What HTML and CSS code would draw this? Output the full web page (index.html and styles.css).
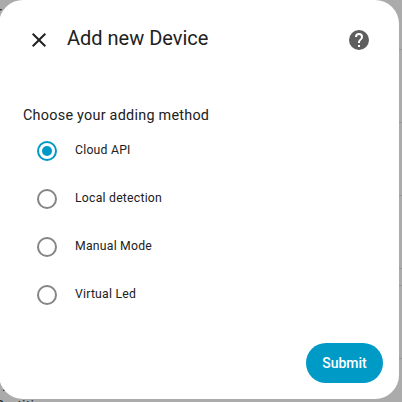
FILE: index.html
```html
<!DOCTYPE html>
<html lang="en">
<head>
<meta charset="utf-8">
<title>Add new Device</title>
<link rel="stylesheet" href="styles.css">
</head>
<body>
<div class="backdrop">
  <i class="rule r1"></i><i class="rule r2"></i><i class="rule r3"></i><i class="rule r4"></i><i class="rule r5"></i><i class="rule r6"></i>
  <span class="behind b1">r</span>
  <span class="behind b2">.</span>
  <span class="behind b3">Partiti</span>
</div>
<main class="dialog">
  <header class="head">
    <svg class="icon close" viewBox="0 0 24 24"><path d="M19 6.41L17.59 5 12 10.59 6.41 5 5 6.41 10.59 12 5 17.59 6.41 19 12 13.41 17.59 19 19 17.59 13.41 12z"/></svg>
    <h1 class="title">Add new Device</h1>
    <svg class="icon help" viewBox="0 0 24 24"><path d="M15.07 11.25l-.9.92C13.45 12.89 13 13.5 13 15h-2v-.5c0-1.11.45-2.11 1.17-2.83l1.24-1.26c.37-.36.59-.86.59-1.41a2 2 0 0 0-4 0H8a4 4 0 0 1 8 0c0 .88-.36 1.67-.93 2.25M13 19h-2v-2h2M12 2a10 10 0 1 0 0 20 10 10 0 0 0 0-20z"/></svg>
  </header>
  <section class="content">
    <p class="label">Choose your adding method</p>
    <div class="option"><span class="radio checked"></span><span class="name">Cloud API</span></div>
    <div class="option"><span class="radio"></span><span class="name">Local detection</span></div>
    <div class="option"><span class="radio"></span><span class="name">Manual Mode</span></div>
    <div class="option"><span class="radio"></span><span class="name">Virtual Led</span></div>
  </section>
  <footer class="foot"><button class="submit">Submit</button></footer>
</main>
</body>
</html>
```
FILE: styles.css
```css
* { box-sizing: border-box; }
body {
  margin: 0;
  height: 402px;
  overflow: hidden;
  background: #ababab;
  font-family: Roboto, sans-serif;
  color: #212121;
}
.backdrop { position: absolute; inset: 0; overflow: hidden; }
.rule { position: absolute; right: 0; width: 3px; height: 1px; background: #979797; }
.r1 { top: 49px; }
.r2 { top: 122px; }
.r3 { top: 195px; }
.r4 { top: 268px; }
.r5 { top: 285px; }
.r6 { top: 358px; }
.behind { position: absolute; font-size: 14px; line-height: 16px; letter-spacing: 0.25px; }
.b1 { left: -3px; top: 4px; }
.b2 { left: 2px; top: 378px; }
.b3 { left: -5px; top: 398px; }
.dialog {
  position: relative;
  display: flex;
  flex-direction: column;
  width: 400px;
  height: 399px;
  margin-left: -1px;
  padding: 16px;
  border-radius: 24px;
  background: #fff;
}
.head { display: flex; align-items: center; height: 48px; padding: 0 12px; }
.icon { width: 24px; height: 24px; flex: none; }
.close { fill: #212121; }
.help { fill: #5e5e5e; }
.title {
  flex: 1;
  margin: -4px 0 0 16px;
  font-size: 20px;
  line-height: 28px;
  font-weight: 400;
}
.content { padding: 41px 8px 0; }
.label { margin: 0 0 13px; font-size: 14.4px; line-height: 21px; letter-spacing: 0.25px; }
.option { display: flex; align-items: center; height: 48px; padding-left: 14px; }
.label + .option { margin-top: -12px; }
.radio {
  display: grid;
  place-items: center;
  width: 20px;
  height: 20px;
  margin-right: 18px;
  border: 2px solid #858585;
  border-radius: 50%;
}
.checked { border-color: #009ac7; }
.checked::after { content: ""; width: 10px; height: 10px; border-radius: 50%; background: #009ac7; }
.name { margin-top: -3px; font-size: 12.25px; line-height: 20px; letter-spacing: 0.22px; }
.foot { display: flex; justify-content: flex-end; margin-top: auto; }
.submit {
  width: 77px;
  height: 40px;
  padding: 0;
  border: 0;
  border-radius: 20px;
  background: #009ac7;
  color: #fff;
  font: 500 14px/20px Roboto, sans-serif;
}
```
